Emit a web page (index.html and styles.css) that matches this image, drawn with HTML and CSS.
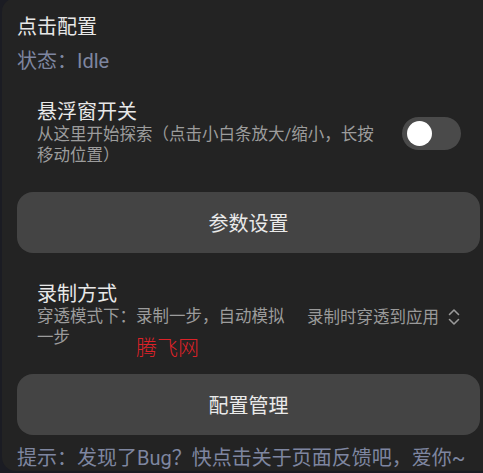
FILE: index.html
```html
<!DOCTYPE html>
<html lang="zh-CN">
<head>
    <meta charset="UTF-8">
    <meta name="viewport" content="width=device-width, initial-scale=1.0">
    <title>点击配置</title>
    <link rel="stylesheet" href="styles.css">
</head>
<body>

<div class="card">
    <h2 class="card-title">点击配置</h2>
    <div class="status">状态：Idle</div>

    <div class="setting-row row-float">
        <div class="setting-text">
            <div class="setting-name">悬浮窗开关</div>
            <div class="setting-desc">从这里开始探索（点击小白条放大/缩小，长按移动位置）</div>
        </div>
        <div class="switch">
            <div class="switch-knob"></div>
        </div>
    </div>

    <div class="big-button">参数设置</div>

    <div class="setting-row row-record">
        <div class="setting-text">
            <div class="setting-name">录制方式</div>
            <div class="setting-desc">穿透模式下：录制一步，自动模拟一步</div>
        </div>
        <div class="select">
            <span>录制时穿透到应用</span>
            <svg class="select-arrow" width="14" height="20" viewBox="0 0 14 20">
                <path d="M2.5 7.5 L7 3 L11.5 7.5 M2.5 12.5 L7 17 L11.5 12.5" fill="none" stroke="#9a9a9a" stroke-width="1.6" stroke-linecap="round" stroke-linejoin="round"/>
            </svg>
        </div>
        <div class="watermark">腾飞网</div>
    </div>

    <div class="big-button">配置管理</div>

    <div class="hint">提示：发现了Bug？快点击关于页面反馈吧，爱你~</div>
</div>

</body>
</html>
```

FILE: styles.css
```css
* {
    box-sizing: border-box;
}

html, body {
    margin: 0;
    height: 100%;
    overflow: hidden;
    background-color: #1b1c23;
    font-family: Roboto, "Noto Sans CJK SC", sans-serif;
}

.card {
    margin: -2px 0 0 2px;
    width: 493px;
    height: 473px;
    padding: 17px 15px 0 15px;
    background-color: #232323;
    border-radius: 14px;
    color: #e8e8e8;
}

.card-title {
    margin: 0;
    font-size: 20px;
    font-weight: normal;
    line-height: 24px;
}

.status {
    margin-top: 10px;
    font-size: 20px;
    line-height: 24px;
    color: #7e86a0;
}

.setting-row {
    position: relative;
    display: flex;
    align-items: center;
    padding: 0 19px 0 20px;
}

.row-float {
    margin-top: 27px;
    gap: 24px;
}

.row-record {
    margin-top: 29px;
    gap: 18px;
}

.setting-text {
    flex: 1;
}

.setting-name {
    font-size: 20px;
    line-height: 24px;
}

.setting-desc {
    font-size: 16.5px;
    line-height: 21px;
    color: #9c9c9c;
}

.switch {
    width: 59px;
    height: 33px;
    border-radius: 17px;
    background-color: #4a4a4a;
    display: flex;
    align-items: center;
    padding-left: 5px;
}

.switch-knob {
    width: 25px;
    height: 25px;
    border-radius: 50%;
    background-color: #ffffff;
}

.select {
    display: flex;
    align-items: center;
    gap: 8px;
    font-size: 16.5px;
    line-height: 21px;
    color: #9a9a9a;
    padding-top: 4px;
}

.select-arrow {
    display: block;
}

.big-button {
    height: 61px;
    margin-top: 26px;
    border-radius: 16px;
    background-color: #444444;
    display: flex;
    align-items: center;
    justify-content: center;
    font-size: 20px;
    color: #eaeaea;
}

.watermark {
    position: absolute;
    left: 119px;
    top: 54px;
    font-size: 21px;
    font-weight: 300;
    line-height: 24px;
    color: #dc2228;
}

.hint {
    margin-top: 10px;
    font-size: 20px;
    line-height: 26px;
    color: #7e86a0;
    white-space: nowrap;
}
```
